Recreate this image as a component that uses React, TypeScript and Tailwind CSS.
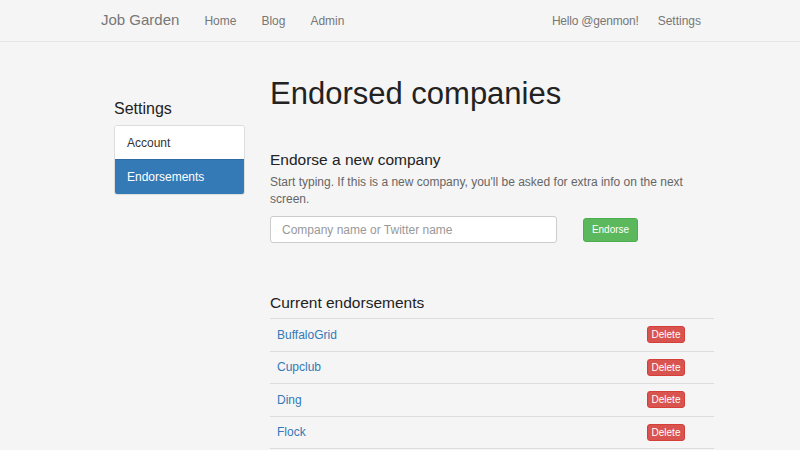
import React from "react";

const font = { fontFamily: '"Liberation Sans", Arial, Helvetica, sans-serif' };

export default function App() {
  const companies = ["BuffaloGrid", "Cupclub", "Ding", "Flock"];
  return (
    <div className="min-h-[450px] w-full bg-[#f5f5f5] text-[#333]" style={font}>
      <nav className="flex h-[42px] items-center justify-between border-b border-[#e6e6e6] bg-[#f5f5f5] pl-[101px] pr-[99px] text-[#777]">
        <div className="flex items-center">
          <span className="text-[15px] text-[#777]">Job Garden</span>
          <div className="ml-[25px] flex items-center gap-[25px] text-[12px]">
            <span>Home</span>
            <span>Blog</span>
            <span>Admin</span>
          </div>
        </div>
        <div className="flex items-center gap-[19px] text-[12px]">
          <span className="tracking-[-0.2px]">Hello @genmon!</span>
          <span>Settings</span>
        </div>
      </nav>

      <div className="flex pl-[114px]">
        <aside className="w-[131px] pt-[57px]">
          <h2 className="text-[16px] leading-[20px] text-[#222]">Settings</h2>
          <div className="mt-[6px] overflow-hidden rounded-[3px] border border-[#ddd] text-[12px]">
            <div className="flex h-[33px] items-center bg-white px-[12px] text-[#333]">Account</div>
            <div className="flex h-[35px] items-center border-t border-[#2e6da4] bg-[#337ab7] px-[12px] text-white">
              Endorsements
            </div>
          </div>
        </aside>

        <main className="ml-[25px] w-[444px] pt-[35px]">
          <h1 className="text-[31px] leading-[34px] text-[#222]">Endorsed companies</h1>

          <h3 className="mt-[39px] text-[15.5px] leading-[20px] text-[#222]">Endorse a new company</h3>
          <p className="mt-[4px] text-[12px] leading-[17px] text-[#666]">
            Start typing. If this is a new company, you'll be asked for extra info on the next screen.
          </p>
          <div className="mt-[8px] flex items-center">
            <div className="flex h-[27px] w-[287px] items-center rounded-[3px] border border-[#ccc] bg-white px-[11px] text-[12px] text-[#999]">
              Company name or Twitter name
            </div>
            <button className="ml-[26px] flex h-[24px] w-[55px] items-center justify-center rounded-[3px] border border-[#4cae4c] bg-[#5cb85c] text-[10px] text-white">
              Endorse
            </button>
          </div>

          <h3 className="mt-[50px] text-[15.5px] leading-[20px] text-[#222]">Current endorsements</h3>
          <div className="mt-[5px]">
            {companies.map((c) => (
              <div
                key={c}
                className="flex h-[32.5px] items-center justify-between border-t border-[#ddd] pl-[7px] pr-[29px]"
              >
                <span className="text-[12px] text-[#337ab7]">{c}</span>
                <button className="flex h-[17px] w-[38px] items-center justify-center rounded-[3px] border border-[#d43f3a] bg-[#d9534f] text-[10px] text-white">
                  Delete
                </button>
              </div>
            ))}
            <div className="border-t border-[#ddd]" />
          </div>
        </main>
      </div>
    </div>
  );
}
